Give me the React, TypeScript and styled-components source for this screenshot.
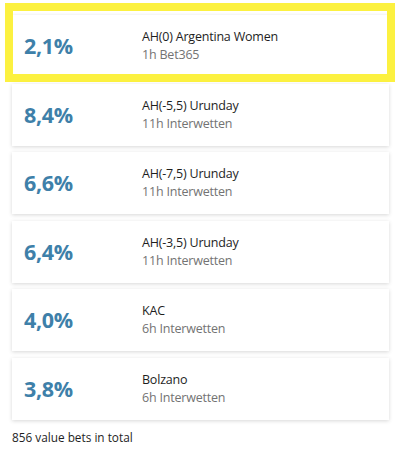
import React from 'react'
import styled, { createGlobalStyle } from 'styled-components'

interface iBet {
  id: number
  value: string
  title: string
  age: string
  bookie: string
}

const bets: iBet[] = [
  { id: 1, value: '2,1%', title: 'AH(0) Argentina Women', age: '1h', bookie: 'Bet365' },
  { id: 2, value: '8,4%', title: 'AH(-5,5) Urunday', age: '11h', bookie: 'Interwetten' },
  { id: 3, value: '6,6%', title: 'AH(-7,5) Urunday', age: '11h', bookie: 'Interwetten' },
  { id: 4, value: '6,4%', title: 'AH(-3,5) Urunday', age: '11h', bookie: 'Interwetten' },
  { id: 5, value: '4,0%', title: 'KAC', age: '6h', bookie: 'Interwetten' },
  { id: 6, value: '3,8%', title: 'Bolzano', age: '6h', bookie: 'Interwetten' }
]

const App: React.FC = () => {
  return (
    <Page>
      <GlobalStyle />
      <BetList>
        {bets.map((bet, index) => (
          <BetCard key={bet.id}>
            <Percent>{bet.value}</Percent>
            <Info>
              <Title>{bet.title}</Title>
              <Meta>
                {bet.age} {bet.bookie}
              </Meta>
            </Info>
            {index === 0 && <Highlight />}
          </BetCard>
        ))}
      </BetList>
      <Total>856 value bets in total</Total>
    </Page>
  )
}

export default App

const GlobalStyle = createGlobalStyle`
  html, body {
    margin: 0;
    padding: 0;
    background: #ffffff;
  }
  body {
    font-family: 'Open Sans', 'Noto Sans', sans-serif;
    -webkit-font-smoothing: antialiased;
  }
`
const Page = styled.div`
  width: 400px;
  height: 455px;
  padding: 15px 0 0 12px;
  box-sizing: border-box;
`
const BetList = styled.div`
  width: 377px;
  display: flex;
  flex-direction: column;
  gap: 6.5px;
`
const BetCard = styled.div`
  position: relative;
  height: 62px;
  display: grid;
  grid-template-columns: 130px 1fr;
  align-items: center;
  background: #ffffff;
  box-shadow: 0 1px 4px rgba(0, 0, 0, 0.16);
`
const Percent = styled.div`
  padding-left: 12px;
  font-size: 21.5px;
  font-weight: 700;
  letter-spacing: -0.3px;
  color: #3e80a9;
  line-height: 26px;
`
const Info = styled.div`
  display: flex;
  flex-direction: column;
  gap: 2px;
`
const Title = styled.div`
  font-size: 12.5px;
  line-height: 16px;
  color: #1e1e1e;
  letter-spacing: -0.2px;
`
const Meta = styled.div`
  font-size: 12.5px;
  line-height: 16px;
  color: #737373;
  letter-spacing: -0.2px;
`
const Highlight = styled.div`
  position: absolute;
  left: -7px;
  top: -12px;
  width: 390px;
  height: 79px;
  box-sizing: border-box;
  border: 8px solid #fcf140;
  pointer-events: none;
`
const Total = styled.div`
  margin-top: 9px;
  font-size: 11.8px;
  line-height: 16px;
  color: #1e1e1e;
`
